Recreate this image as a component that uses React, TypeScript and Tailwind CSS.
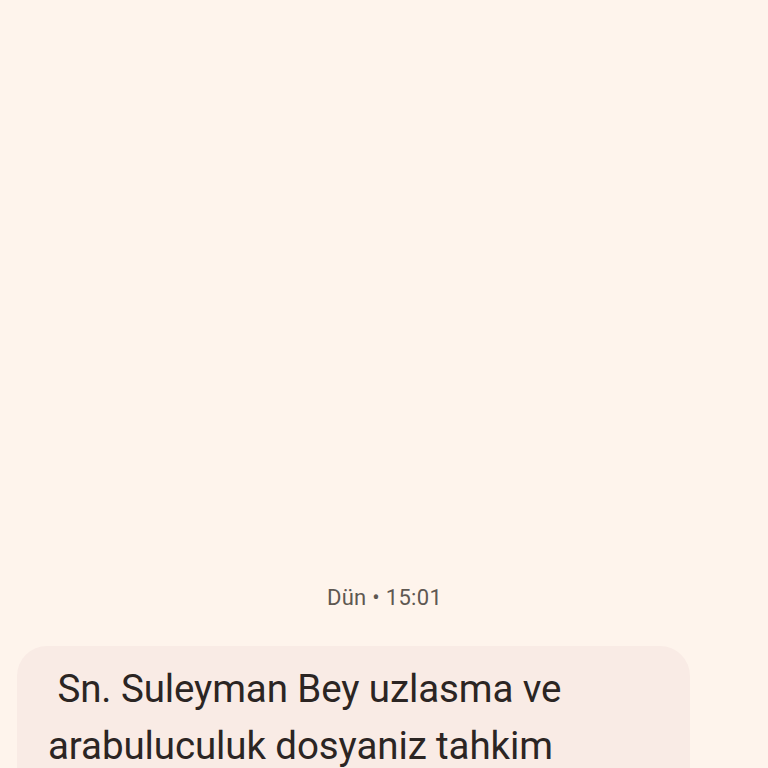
export default function App() {
  return (
    <div className="w-[768px] h-[768px] overflow-hidden bg-[#fef4ec] flex flex-col pt-[587px]" style={{ fontFamily: 'Roboto, "Noto Sans", sans-serif' }}>
      <div className="text-center text-[22px] leading-[22px] h-[22px] text-[#5e5852] tracking-[0.3px] pl-[1px]">Dün • 15:01</div>
      <div className="mt-[37px] ml-[17px] w-[673px] h-[240px] shrink-0 rounded-[30px] bg-[#f9ebe5] pl-[31px] pt-[14px]">
        <p className="text-[38.5px] leading-[57px] text-[#2b2523] whitespace-pre-wrap tracking-[-0.1px]">{" Sn. Suleyman Bey uzlasma ve\narabuluculuk dosyaniz tahkim"}</p>
      </div>
    </div>
  );
}
